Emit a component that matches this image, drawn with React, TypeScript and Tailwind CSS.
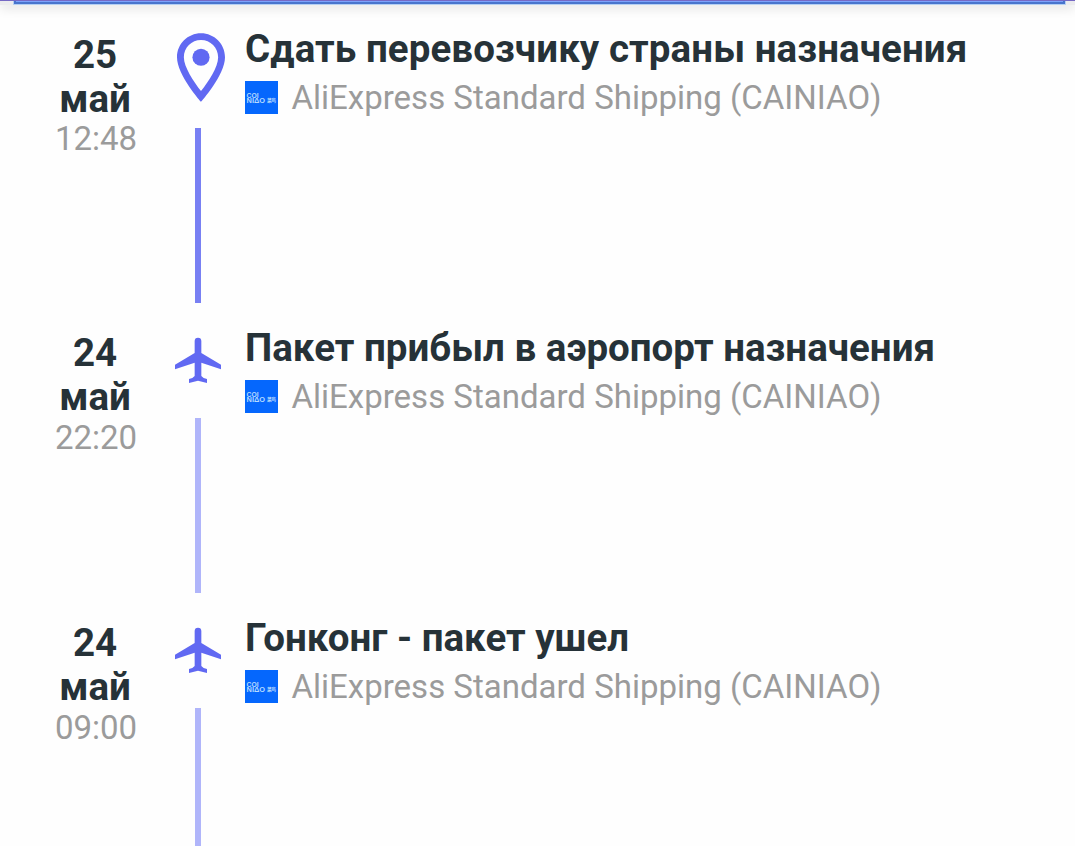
import React from 'react';

interface TrackingEvent {
  day: string;
  month: string;
  time: string;
  title: string;
  carrier: string;
  type: 'pin' | 'plane';
}

const events: TrackingEvent[] = [
  {
    day: '25',
    month: 'май',
    time: '12:48',
    title: 'Сдать перевозчику страны назначения',
    carrier: 'AliExpress Standard Shipping (CAINIAO)',
    type: 'pin',
  },
  {
    day: '24',
    month: 'май',
    time: '22:20',
    title: 'Пакет прибыл в аэропорт назначения',
    carrier: 'AliExpress Standard Shipping (CAINIAO)',
    type: 'plane',
  },
  {
    day: '24',
    month: 'май',
    time: '09:00',
    title: 'Гонконг - пакет ушел',
    carrier: 'AliExpress Standard Shipping (CAINIAO)',
    type: 'plane',
  },
];

const PinIcon = () => (
  <svg className="ml-[5px] h-[69px] w-[48px] shrink-0" viewBox="5 2 14 20" fill="#6169f2">
    <path d="M12 2C8.13 2 5 5.13 5 9c0 5.25 7 13 7 13s7-7.75 7-13c0-3.87-3.13-7-7-7zM7 9c0-2.76 2.24-5 5-5s5 2.24 5 5c0 2.88-2.88 7.19-5 9.88C9.92 16.21 7 11.85 7 9z" />
    <circle cx="12" cy="9" r="2.5" />
  </svg>
);

const PlaneIcon = () => (
  <svg className="h-[47px] w-[46px] shrink-0" viewBox="0 0 138 141" fill="#6169f2">
    <path d="M59 12a10 10 0 0 1 20 0v36l59 35v14L79 77v40q6 8 17 9v12l-27-7-27 7v-12q11-1 17-9V77L0 97V83l59-35z" />
  </svg>
);

const CarrierLogo = () => (
  <svg className="h-[33px] w-[33px] shrink-0" viewBox="0 0 33 33">
    <rect width="33" height="33" fill="#0567fd" />
    <g
      fill="#b4daff"
      fontFamily='"Liberation Sans", "Noto Sans CJK SC", sans-serif'
      fontSize="6.8"
      fontWeight="bold"
    >
      <text x="1.6" y="16.8" textLength="12" lengthAdjust="spacingAndGlyphs">COI</text>
      <text x="1.6" y="22" textLength="18.5" lengthAdjust="spacingAndGlyphs">NIΔO</text>
      <text x="22" y="21.2" fontSize="4.8" textLength="9">菜鸟</text>
    </g>
  </svg>
);

const EventRow = ({ event }: { event: TrackingEvent }) => {
  const isPin = event.type === 'pin';

  return (
    <div className={isPin ? 'flex h-[299px]' : 'flex h-[290px]'}>
      <div className="ml-[45px] w-[100px] shrink-0 pt-[27px] text-center">
        <div className={isPin ? 'mt-px -mb-px' : ''}>
          <div className="text-[38.5px] leading-[44px] font-bold text-[#263238]">{event.day}</div>
          <div className="text-[38.5px] leading-[44px] font-bold text-[#263238]">{event.month}</div>
        </div>
        <div className="pl-[2px] text-[33px] leading-[38px] text-[#9b9b9b]">{event.time}</div>
      </div>
      <div className="ml-[28px] flex w-[50px] shrink-0 flex-col items-center">
        <div className={isPin ? 'flex h-[123px] pt-[28px]' : 'flex h-[114px] pt-[33px]'}>
          {isPin ? <PinIcon /> : <PlaneIcon />}
        </div>
        <div className={isPin ? 'h-[175px] w-[6px] bg-[#7880f3]' : 'h-[175px] w-[6px] bg-[#b0b5fa]'} />
      </div>
      <div className="ml-[22px] pt-[22px] whitespace-nowrap">
        <div
          className={
            isPin
              ? 'text-[38.5px] leading-[44px] font-bold tracking-[0.08px] text-[#263238]'
              : 'text-[38.5px] leading-[44px] font-bold text-[#263238]'
          }
        >
          {event.title}
        </div>
        <div className="mt-[10px] flex h-[33px] items-center gap-[13.5px]">
          <CarrierLogo />
          <span className="text-[33px] leading-[38px] text-[#9b9b9b]">{event.carrier}</span>
        </div>
      </div>
    </div>
  );
};

export default function App() {
  return (
    <div className="h-[846px] w-[1075px] overflow-hidden bg-[#fefefe] font-['Roboto',sans-serif]">
      {/* Bottom edge of the card above the timeline */}
      <div className="h-[5px] border-t border-[#7669c4] bg-[#ececee] pr-[9px] pl-[13px] shadow-[0_2px_12px_rgba(0,0,0,0.18)]">
        <div className="h-[4px] border-x border-b border-[#b4cff2] bg-[#4874cd]">
          <div className="mr-[2px] ml-[2px] h-px bg-[#7ca2fb]" />
        </div>
      </div>
      {events.map((event, index) => (
        <EventRow key={index} event={event} />
      ))}
    </div>
  );
}
